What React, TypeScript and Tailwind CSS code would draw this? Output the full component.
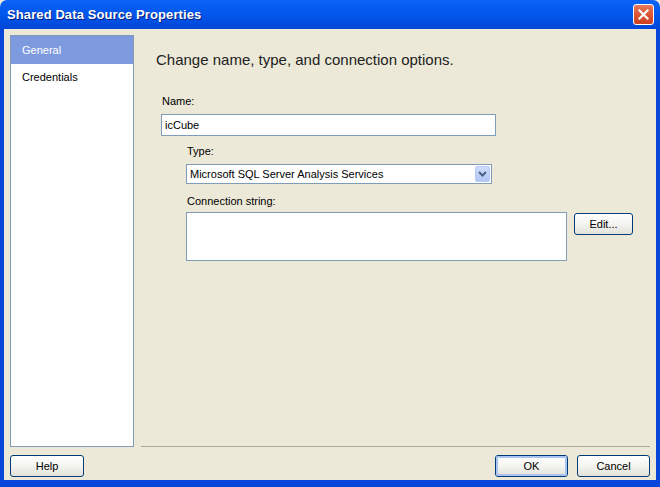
const ui = { fontFamily: '"Liberation Sans", "Noto Sans", sans-serif' };

function XpButton({
  label,
  width,
  isDefault = false,
}: {
  label: string;
  width: string;
  isDefault?: boolean;
}) {
  return (
    <button
      className={`${width} h-[22px] rounded-[3px] border border-[#003C74] bg-linear-to-b from-[#FFFFFF] via-[#F4F4F0] to-[#E3E2DA] text-[11px] text-black p-0`}
      style={ui}
    >
      <span
        className={`flex h-full w-full items-center justify-center rounded-[2px] ${
          isDefault ? 'border-2 border-[#A9C4F0]' : ''
        }`}
      >
        {label}
      </span>
    </button>
  );
}

export default function App() {
  return (
    <div className="w-[660px] h-[487px] flex flex-col bg-[#ECE9D8]" style={ui}>
      {/* title bar */}
      <div className="h-[29px] shrink-0 flex items-center justify-between rounded-t-[7px] bg-linear-to-b from-[#0A62F6] via-[#0256EC] to-[#0046D8] pl-[7px] pr-[6px]">
        <span
          className="text-[13px] font-bold text-white tracking-[0.1px] [text-shadow:1px_1px_0_#0A1E7A]"
          style={{ fontFamily: '"Liberation Sans", "DejaVu Sans", sans-serif' }}
        >
          Shared Data Source Properties
        </span>
        <div className="w-[21px] h-[21px] rounded-[3px] border border-white bg-linear-to-b from-[#E8795A] via-[#DD5533] to-[#C9401F] flex items-center justify-center">
          <svg width="11" height="11" viewBox="0 0 11 11">
            <path d="M1.5 1.5 L9.5 9.5 M9.5 1.5 L1.5 9.5" stroke="white" strokeWidth="2.2" strokeLinecap="square" />
          </svg>
        </div>
      </div>

      {/* window body */}
      <div className="flex-1 flex flex-col border-x-4 border-b-[7px] border-[#0845D8] px-[6px] pt-[6px]">
        <div className="h-[412px] flex">
          {/* page list */}
          <div className="w-[124px] shrink-0 border border-[#7F9DB9] bg-white text-[11px]">
            <div className="h-[28px] flex items-center pl-[11px] bg-[#7D9ADF] text-white">General</div>
            <div className="h-[27px] flex items-center pl-[11px] text-black">Credentials</div>
          </div>

          {/* page content */}
          <div className="flex-1 flex flex-col pl-[7px]">
            <div className="flex-1 pl-[15px] pt-[15px] text-[11px] text-black">
              <h1 className="text-[15px] leading-[20px] text-[#222]">
                Change name, type, and connection options.
              </h1>

              <div className="mt-[24px] pl-[6px] leading-[14px]">Name:</div>
              <div className="mt-[6px] ml-[5px] w-[335px] h-[22px] border border-[#7F9DB9] bg-white flex items-center pl-[3px]">
                icCube
              </div>

              <div className="ml-[30px]">
                <div className="mt-[8px] pl-[1px] leading-[14px]">Type:</div>
                <div className="mt-[6px] w-[306px] h-[20px] border border-[#7F9DB9] bg-white flex items-center justify-between pl-[3px] pr-[1px]">
                  <span>Microsoft SQL Server Analysis Services</span>
                  <div className="w-[15px] h-[16px] rounded-[2px] border border-[#B9CCF6] bg-linear-to-b from-[#CFDDFC] to-[#B2C6F7] flex items-center justify-center">
                    <svg width="9" height="6" viewBox="0 0 9 6">
                      <path d="M1 1 L4.5 4.5 L8 1" stroke="#4D6185" strokeWidth="2" fill="none" />
                    </svg>
                  </div>
                </div>

                <div className="mt-[10px] pl-[1px] leading-[14px]">Connection string:</div>
                <div className="mt-[4px] flex items-start gap-[7px]">
                  <div className="w-[381px] h-[49px] border border-[#7F9DB9] bg-white" />
                  <div className="mt-[1px]">
                    <XpButton label="Edit..." width="w-[59px]" />
                  </div>
                </div>
              </div>
            </div>
            <div className="h-px bg-[#ACA899]" />
          </div>
        </div>

        {/* footer buttons */}
        <div className="mt-[8px] flex items-start">
          <XpButton label="Help" width="w-[74px]" />
          <div className="flex-1" />
          <XpButton label="OK" width="w-[73px]" isDefault />
          <div className="w-[9px]" />
          <XpButton label="Cancel" width="w-[73px]" />
        </div>
      </div>
    </div>
  );
}
